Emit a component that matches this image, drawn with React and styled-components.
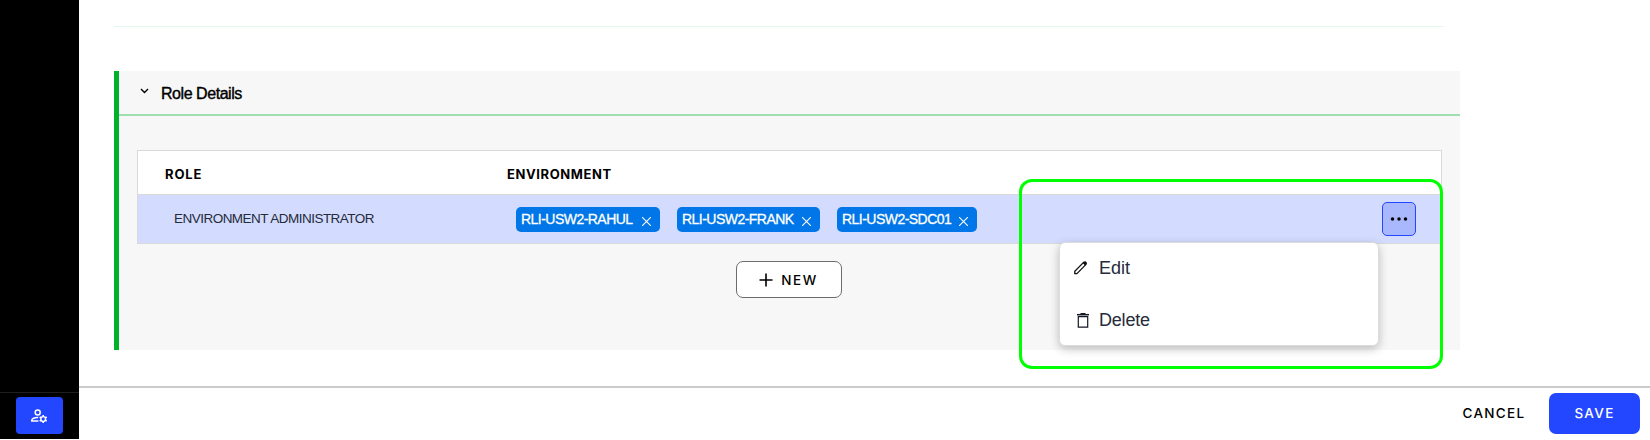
import React from 'react';
import styled, { createGlobalStyle } from 'styled-components';

const GlobalStyle = createGlobalStyle`
  *, *::before, *::after { box-sizing: border-box; }
  body {
    margin: 0;
    background: #fff;
    color: #000;
    font-family: "Liberation Sans", Arial, sans-serif;
    overflow: hidden;
  }
  button { font: inherit; padding: 0; margin: 0; border: 0; background: none; color: inherit; }
  svg { display: block; flex: none; }
`;

const Page = styled.div`
  position: relative;
  display: flex;
  width: 1650px;
  height: 440px;
`;

const Sidebar = styled.aside`
  display: flex;
  flex-direction: column;
  justify-content: flex-end;
  width: 79px;
  height: 439px;
  background: #000;
`;

const SidebarFooter = styled.div`
  display: flex;
  justify-content: center;
  height: 47px;
  padding-top: 4px;
  border-top: 1px solid #1f1f1f;
`;

const SidebarButton = styled.button`
  display: flex;
  align-items: center;
  justify-content: center;
  width: 47px;
  height: 37px;
  padding-right: 1px;
  border-radius: 4px;
  background: #2347ff;
  color: #fff;
`;

const Main = styled.main`
  display: flex;
  flex-direction: column;
  flex: 1;
`;

const Content = styled.div`
  height: 386px;
  padding: 26px 0 0 35px;
`;

const Divider = styled.div`
  width: 1330px;
  height: 1px;
  margin-bottom: 44px;
  background: #e4f8ec;
`;

const Panel = styled.section`
  width: 1346px;
  height: 279px;
  border-left: 5px solid #00b12c;
  background: #f7f7f7;
`;

const PanelHeader = styled.header`
  display: flex;
  align-items: center;
  height: 45px;
  padding-left: 21px;
  border-bottom: 2px solid #9edeb0;
  gap: 12px;

  svg { margin-top: -4px; }
`;

const PanelTitle = styled.h2`
  margin: 2px 0 0;
  font-size: 16px;
  font-weight: 400;
  line-height: 20px;
  letter-spacing: -0.45px;
  -webkit-text-stroke: 0.4px #000;
`;

const PanelBody = styled.div`
  display: flex;
  flex-direction: column;
  align-items: center;
  padding: 34px 18px 0;
`;

const Table = styled.div`
  width: 1305px;
  border: 1px solid #d9d9d9;
  background: #fff;
`;

const Row = styled.div`
  display: grid;
  grid-template-columns: 342px 1fr auto;
  align-items: center;
`;

const HeadRow = styled(Row)`
  height: 44px;
  border-bottom: 1px solid #d9d9d9;
  padding: 2px 26px 0 27px;
`;

const BodyRow = styled(Row)`
  height: 48px;
  padding: 0 25px 0 36px;
  background: #d3dcff;
`;

const HeadCell = styled.div`
  font-family: Inter, sans-serif;
  font-size: 13px;
  font-weight: 650;
  line-height: 18px;
  letter-spacing: ${(p) => p.$spacing};
`;

const RoleName = styled.div`
  font-size: 13.5px;
  line-height: 18px;
  letter-spacing: -0.52px;
  color: #252b3a;
`;

const Tags = styled.div`
  display: flex;
  gap: 17px;
`;

const Tag = styled.span`
  display: flex;
  align-items: center;
  justify-content: space-between;
  width: ${(p) => p.$width}px;
  height: 25px;
  padding: 0 9px 0 5px;
  border-radius: 5px;
  background: #0076e8;
  color: #fff;
  font-size: 14px;
  line-height: 24px;
  letter-spacing: -0.53px;
  white-space: nowrap;
  -webkit-text-stroke: 0.3px #fff;

  svg { margin-top: 4px; }
`;

const MoreButton = styled.button`
  display: flex;
  align-items: center;
  justify-content: center;
  width: 34px;
  height: 34px;
  border: 1.5px solid #2347ff;
  border-radius: 5px;
  background: #a9b7fd;
`;

const NewButton = styled.button`
  display: flex;
  align-items: center;
  justify-content: center;
  gap: 8px;
  width: 106px;
  height: 37px;
  margin: 17px 2px 0 0;
  border: 1px solid #6c6c6c;
  border-radius: 7px;
  background: #fff;
  font-family: Inter, sans-serif;
  font-size: 13.5px;
  font-weight: 550;
  letter-spacing: 1.5px;
`;

const Footer = styled.footer`
  display: flex;
  justify-content: flex-end;
  height: 54px;
  padding: 5px 10px 0 0;
  border-top: 2px solid #cbcbcb;
`;

const FooterButton = styled.button`
  width: ${(p) => (p.$primary ? 91 : 110)}px;
  height: 41px;
  padding-bottom: 1px;
  border-radius: 7px;
  background: ${(p) => (p.$primary ? '#2347ff' : 'transparent')};
  color: ${(p) => (p.$primary ? '#fff' : '#000')};
  font-family: Inter, sans-serif;
  font-size: 13.5px;
  font-weight: 550;
  letter-spacing: 1.3px;
`;

const Menu = styled.div`
  position: absolute;
  left: 1059px;
  top: 242px;
  display: flex;
  flex-direction: column;
  width: 320px;
  height: 104px;
  border: 1px solid #dcdcdc;
  border-radius: 6px;
  background: #fff;
  box-shadow: 0 3px 10px rgba(0, 0, 0, 0.24);
`;

const MenuItem = styled.button`
  display: flex;
  align-items: center;
  height: 52px;
  padding: ${(p) => p.$drop || 0}px 0 0 ${(p) => p.$indent}px;
  gap: ${(p) => p.$gap}px;
  color: #252b3a;
  font-size: 18px;
  letter-spacing: ${(p) => p.$spacing || 0};
`;

const Highlight = styled.div`
  position: absolute;
  left: 1019px;
  top: 179px;
  width: 424px;
  height: 190px;
  border: 3px solid #00ff00;
  border-radius: 13px;
  pointer-events: none;
`;

const UserGearIcon = () => (
  <svg width="18" height="16" viewBox="0 0 18 16" fill="none" stroke="#fff" strokeWidth="1.5">
    <circle cx="7.7" cy="4.4" r="2.5" />
    <path d="M8.2 9.6C4.5 9.4 1.8 10.7 1.8 12.2v.9h6.6" />
    <circle cx="13.2" cy="11" r="2.4" strokeWidth="1.4" />
    <path d="M13.2 7v1.8M13.2 13.2V15M9.7 9l1.5.85M15.2 12.15l1.5.85M9.7 13l1.5-.85M15.2 9.85l1.5-.85" strokeWidth="1.6" />
  </svg>
);

const ChevronIcon = () => (
  <svg width="9" height="6" viewBox="0 0 9 6" fill="none" stroke="#000" strokeWidth="1.4">
    <path d="M1 1l3.5 3.5L8 1" />
  </svg>
);

const CloseIcon = () => (
  <svg width="9" height="9" viewBox="0 0 9 9" stroke="#fff" strokeWidth="1.1">
    <path d="M0 0l9 9M9 0L0 9" />
  </svg>
);

const PlusIcon = () => (
  <svg width="14" height="14" viewBox="0 0 14 14" stroke="#000" strokeWidth="1.6">
    <path d="M7 .5v13M.5 7h13" />
  </svg>
);

const DotsIcon = () => (
  <svg width="18" height="4" viewBox="0 0 18 4" fill="#000">
    <circle cx="2.5" cy="2" r="1.75" />
    <circle cx="9" cy="2" r="1.75" />
    <circle cx="15.5" cy="2" r="1.75" />
  </svg>
);

const PencilIcon = () => (
  <svg width="18" height="18" viewBox="0 0 18 18">
    <path d="M2.8 14.6v-2.3l8.8-8.9 2.2 2.2-8.9 9z" fill="none" stroke="#111" strokeWidth="1.3" />
    <path d="M10.7 4.1l1.6-1.6c.5-.5 1-.5 1.5 0l.9 1c.5.5.5 1 0 1.5l-1.6 1.6z" fill="#111" />
  </svg>
);

const TrashIcon = () => (
  <svg width="18" height="18" viewBox="0 0 18 18" fill="none" stroke="#151924">
    <path d="M3 3.7h12" strokeWidth="1.5" />
    <path d="M6.5 2.7h5" strokeWidth="1.4" />
    <path d="M4.3 5.7h9.4v10.5H4.3z" strokeWidth="1.2" />
  </svg>
);

const environments = [
  { name: 'RLI-USW2-RAHUL', width: 144 },
  { name: 'RLI-USW2-FRANK', width: 143 },
  { name: 'RLI-USW2-SDC01', width: 140 },
];

export default function App() {
  return (
    <>
      <GlobalStyle />
      <Page>
        <Sidebar>
          <SidebarFooter>
            <SidebarButton aria-label="User settings"><UserGearIcon /></SidebarButton>
          </SidebarFooter>
        </Sidebar>
        <Main>
          <Content>
            <Divider />
            <Panel>
              <PanelHeader>
                <ChevronIcon />
                <PanelTitle>Role Details</PanelTitle>
              </PanelHeader>
              <PanelBody>
                <Table>
                  <HeadRow>
                    <HeadCell $spacing="0.9px">ROLE</HeadCell>
                    <HeadCell $spacing="0.6px">ENVIRONMENT</HeadCell>
                  </HeadRow>
                  <BodyRow>
                    <RoleName>ENVIRONMENT ADMINISTRATOR</RoleName>
                    <Tags>
                      {environments.map((env) => (
                        <Tag key={env.name} $width={env.width}>
                          {env.name}
                          <CloseIcon />
                        </Tag>
                      ))}
                    </Tags>
                    <MoreButton aria-label="More actions"><DotsIcon /></MoreButton>
                  </BodyRow>
                </Table>
                <NewButton><PlusIcon />NEW</NewButton>
              </PanelBody>
            </Panel>
          </Content>
          <Footer>
            <FooterButton>CANCEL</FooterButton>
            <FooterButton $primary>SAVE</FooterButton>
          </Footer>
        </Main>
        <Menu>
          <MenuItem $indent={12} $gap={9}><PencilIcon />Edit</MenuItem>
          <MenuItem $indent={14} $gap={7} $drop={2} $spacing="-0.2px"><TrashIcon />Delete</MenuItem>
        </Menu>
        <Highlight />
      </Page>
    </>
  );
}
